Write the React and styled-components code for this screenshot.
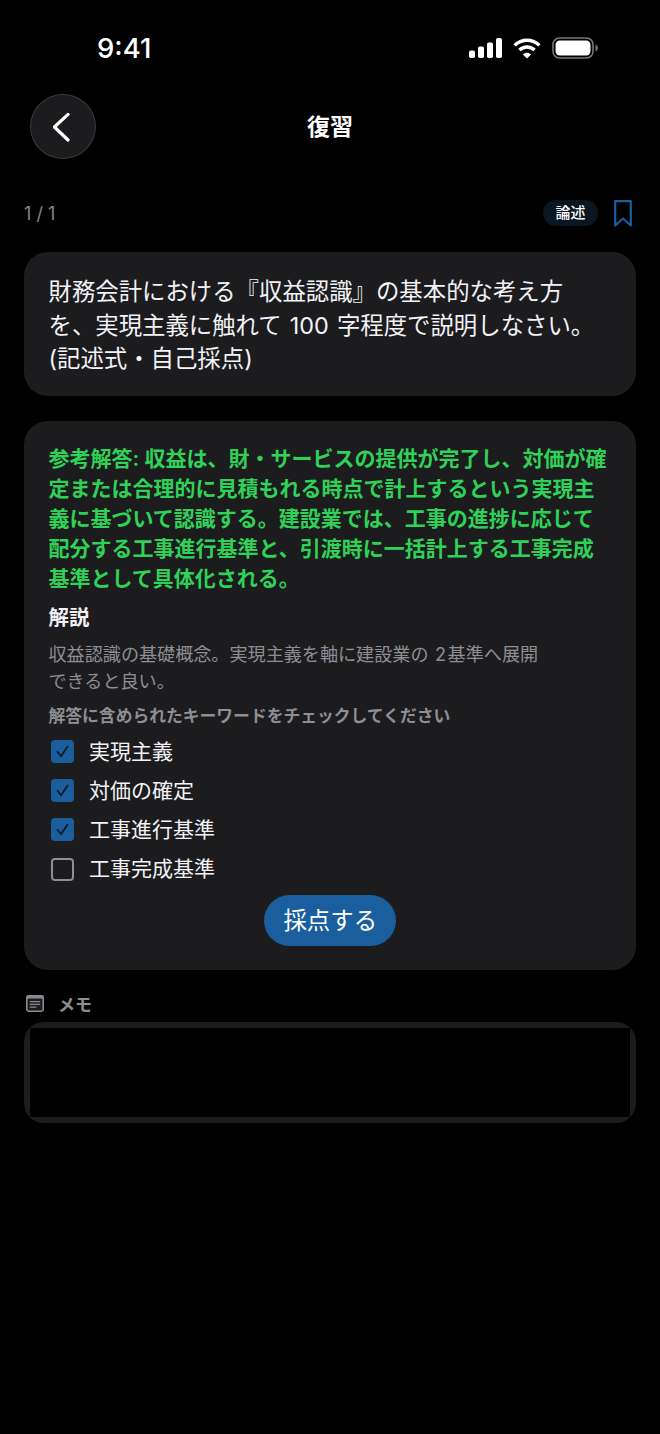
import React from "react";
import styled, { createGlobalStyle } from "styled-components";

const GlobalStyle = createGlobalStyle`
  html, body {
    margin: 0;
    padding: 0;
    background: #000;
  }
  * {
    box-sizing: border-box;
  }
`;

const Page = styled.div`
  width: 660px;
  height: 1434px;
  background: #000;
  color: #fff;
  font-family: Inter, "Noto Sans CJK JP", sans-serif;
  overflow: hidden;
`;

const StatusBar = styled.div`
  height: 94px;
  padding: 33px 62px 0 97px;
  display: flex;
  justify-content: space-between;
  align-items: flex-start;
`;

const Time = styled.div`
  font-size: 27.5px;
  line-height: 30px;
  font-weight: 500;
`;

const StatusIcons = styled.div`
  display: flex;
  align-items: center;
  height: 30px;
  gap: 11px;
`;

const Header = styled.div`
  height: 65px;
  padding: 0 30px;
  display: flex;
  align-items: center;
  position: relative;
`;

const BackButton = styled.button`
  width: 66px;
  height: 65px;
  border-radius: 50%;
  background: #1c1c1e;
  border: 1px solid #3a3a3c;
  padding: 0;
  display: flex;
  align-items: center;
  justify-content: center;
`;

const HeaderTitle = styled.div`
  position: absolute;
  left: 0;
  right: 0;
  text-align: center;
  font-size: 23px;
  line-height: 30px;
  font-weight: 700;
`;

const MetaRow = styled.div`
  margin-top: 37px;
  padding: 0 28px 0 24px;
  height: 34px;
  display: flex;
  align-items: center;
  justify-content: space-between;
`;

const Counter = styled.div`
  font-size: 18px;
  color: #85858a;
`;

const MetaRight = styled.div`
  display: flex;
  align-items: center;
  gap: 16px;
`;

const Tag = styled.div`
  width: 55px;
  height: 26px;
  border-radius: 13px;
  background: #0a1720;
  font-size: 15px;
  font-weight: 500;
  line-height: 26px;
  text-align: center;
`;

const Card = styled.div`
  margin: ${(p) => p.$top}px 24px 0;
  background: #1c1c1e;
  border-radius: 24px;
  padding: ${(p) => p.$padding};
`;

const Question = styled.div`
  font-size: 23.4px;
  line-height: 33.5px;
  color: #f2f2f7;
  white-space: nowrap;
`;

const Num = styled.span`
  padding: 0 1.5px;
`;

const Answer = styled.div`
  font-size: 21px;
  line-height: 30.2px;
  font-weight: 600;
  color: #30d158;
  white-space: nowrap;
`;

const SectionTitle = styled.div`
  margin-top: 8.5px;
  font-size: 20.4px;
  line-height: 30px;
  font-weight: 700;
  color: #f2f2f7;
`;

const Explanation = styled.div`
  margin-top: 8px;
  font-size: 18.1px;
  line-height: 27px;
  color: #8e8e93;
  white-space: nowrap;
`;

const Hint = styled.div`
  margin-top: 8.5px;
  font-size: 16.8px;
  line-height: 24px;
  font-weight: 600;
  color: #8e8e93;
`;

const CheckList = styled.div`
  margin-top: 4.5px;
  padding-left: 2.5px;
  display: flex;
  flex-direction: column;
`;

const CheckRow = styled.div`
  height: 39.2px;
  display: flex;
  align-items: center;
  gap: 15px;
`;

const CheckBox = styled.div`
  width: 23px;
  height: 23px;
  border-radius: 4px;
  background: ${(p) => (p.$checked ? "#1b5e9e" : "transparent")};
  border: ${(p) => (p.$checked ? "none" : "2px solid #8e8e93")};
  display: flex;
  align-items: center;
  justify-content: center;
`;

const CheckLabel = styled.div`
  font-size: 21px;
  line-height: 30px;
  color: #f2f2f7;
`;

const SubmitRow = styled.div`
  margin-top: 6px;
  display: flex;
  justify-content: center;
`;

const SubmitButton = styled.button`
  width: 132px;
  height: 51px;
  border: none;
  border-radius: 26px;
  background: #1b5e9e;
  color: #fff;
  font-family: inherit;
  font-size: 23.4px;
  line-height: 51px;
  padding: 0;
`;

const MemoLabel = styled.div`
  margin-top: 20px;
  padding-left: 26px;
  height: 28px;
  display: flex;
  align-items: center;
  gap: 14px;
  font-size: 17px;
  font-weight: 600;
  color: #8e8e93;
`;

const MemoBox = styled.div`
  margin: 4px 24px 0;
  height: 101px;
  padding: 6px;
  border-radius: 20px;
  background: #1c1c1e;
`;

const MemoInput = styled.div`
  height: 100%;
  background: #000;
`;

const SignalIcon = () => (
  <svg width="33" height="20" viewBox="0 0 33 20" fill="#fff">
    <rect x="0" y="12.5" width="6" height="7.5" rx="1.8" />
    <rect x="9" y="8.5" width="6" height="11.5" rx="1.8" />
    <rect x="18" y="4.5" width="6" height="15.5" rx="1.8" />
    <rect x="27" y="0" width="6" height="20" rx="1.8" />
  </svg>
);

const WifiIcon = () => (
  <svg width="28" height="21" viewBox="0 0 28 21" fill="none" stroke="#fff" strokeWidth="3.4">
    <path d="M1.6 7.4C8.6 .6 19.4 .6 26.4 7.4" />
    <path d="M6.4 12C10.8 7.9 17.2 7.9 21.6 12" />
    <path d="M14 20.6 9.9 16.4C12.3 14.3 15.7 14.3 18.1 16.4Z" fill="#fff" stroke="none" />
  </svg>
);

const BatteryIcon = () => (
  <svg width="46" height="22" viewBox="0 0 46 22" fill="none">
    <rect x="1" y="1" width="40" height="20" rx="6.5" stroke="#77777a" strokeWidth="1.6" />
    <rect x="3.5" y="3.5" width="35" height="15" rx="4.4" fill="#fff" />
    <path d="M43.5 7.5c1.4.5 2.3 1.9 2.3 3.5s-.9 3-2.3 3.5z" fill="#77777a" />
  </svg>
);

const ChevronLeft = () => (
  <svg width="20" height="32" viewBox="0 0 20 32" fill="none" stroke="#fff" strokeWidth="3.2" strokeLinecap="round" strokeLinejoin="round">
    <path d="M15 3.4 1.4 16 15 29" />
  </svg>
);

const BookmarkIcon = () => (
  <svg width="18" height="27" viewBox="0 0 18 27" fill="none" stroke="#1b5e9e" strokeWidth="2.2" strokeLinejoin="round">
    <path d="M1.2 1.2H16.8V25.5L9 18.5 1.2 25.5Z" />
  </svg>
);

const CheckIcon = () => (
  <svg width="15" height="15" viewBox="0 0 15 15" fill="none" stroke="#0f1c2a" strokeWidth="1.8" strokeLinecap="round" strokeLinejoin="round">
    <path d="M2.5 7.8 6 12.3 12.6 2.6" />
  </svg>
);

const MemoIcon = () => (
  <svg width="18" height="17" viewBox="0 0 18 17">
    <rect width="18" height="17" rx="2.4" fill="#8a8a8e" />
    <rect x="1.6" y="3.4" width="14.8" height="12" rx="1" fill="#1c1c1e" />
    <path d="M3.8 6.6H14.2M3.8 9.4H14.2M3.8 12.2H10.4" stroke="#8a8a8e" strokeWidth="1.3" />
  </svg>
);

const keywords = [
  { label: "実現主義", checked: true },
  { label: "対価の確定", checked: true },
  { label: "工事進行基準", checked: true },
  { label: "工事完成基準", checked: false },
];

const App = () => {
  return (
    <Page>
      <GlobalStyle />
      <StatusBar>
        <Time>9:41</Time>
        <StatusIcons>
          <SignalIcon />
          <WifiIcon />
          <BatteryIcon />
        </StatusIcons>
      </StatusBar>

      <Header>
        <BackButton>
          <ChevronLeft />
        </BackButton>
        <HeaderTitle>復習</HeaderTitle>
      </Header>

      <MetaRow>
        <Counter>1 / 1</Counter>
        <MetaRight>
          <Tag>論述</Tag>
          <BookmarkIcon />
        </MetaRight>
      </MetaRow>

      <Card $top={22} $padding="23px 24px 20px 24.5px">
        <Question>
          財務会計における『収益認識』の基本的な考え方
          <br />
          を、実現主義に触れて <Num>100</Num> 字程度で説明しなさい。
          <br />
          (記述式・自己採点)
        </Question>
      </Card>

      <Card $top={25} $padding="23px 24px 24px 24.5px">
        <Answer>
          参考解答: 収益は、財・サービスの提供が完了し、対価が確
          <br />
          定または合理的に見積もれる時点で計上するという実現主
          <br />
          義に基づいて認識する。建設業では、工事の進捗に応じて
          <br />
          配分する工事進行基準と、引渡時に一括計上する工事完成
          <br />
          基準として具体化される。
        </Answer>
        <SectionTitle>解説</SectionTitle>
        <Explanation>
          収益認識の基礎概念。実現主義を軸に建設業の <Num>2</Num>基準へ展開
          <br />
          できると良い。
        </Explanation>
        <Hint>解答に含められたキーワードをチェックしてください</Hint>
        <CheckList>
          {keywords.map((item) => (
            <CheckRow key={item.label}>
              <CheckBox $checked={item.checked}>{item.checked && <CheckIcon />}</CheckBox>
              <CheckLabel>{item.label}</CheckLabel>
            </CheckRow>
          ))}
        </CheckList>
        <SubmitRow>
          <SubmitButton>採点する</SubmitButton>
        </SubmitRow>
      </Card>

      <MemoLabel>
        <MemoIcon />
        メモ
      </MemoLabel>
      <MemoBox>
        <MemoInput />
      </MemoBox>
    </Page>
  );
};

export default App;
